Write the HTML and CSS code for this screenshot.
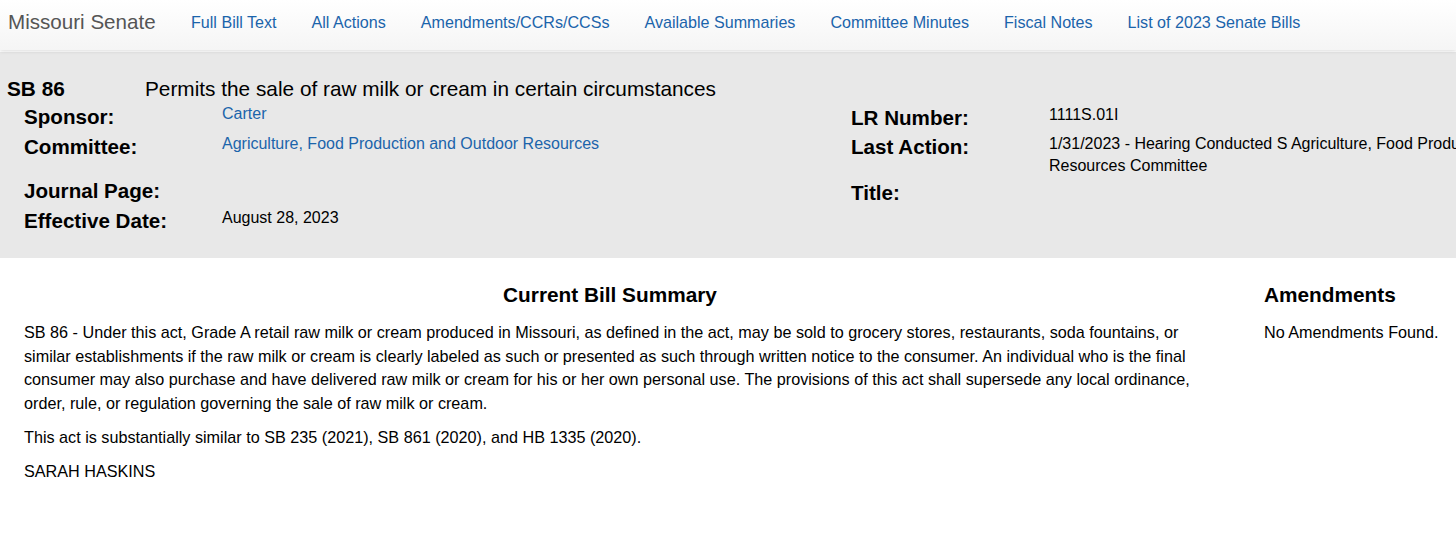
FILE: index.html
```html
<!DOCTYPE html>
<html>
<head>
<meta charset="utf-8">
<link rel="stylesheet" href="styles.css">
</head>
<body>
<nav class="navbar">
  <span class="brand">Missouri Senate</span>
  <ul class="nav-links">
    <li><a href="#">Full Bill Text</a></li>
    <li><a href="#">All Actions</a></li>
    <li><a href="#">Amendments/CCRs/CCSs</a></li>
    <li><a href="#">Available Summaries</a></li>
    <li><a href="#">Committee Minutes</a></li>
    <li><a href="#">Fiscal Notes</a></li>
    <li><a href="#">List of 2023 Senate Bills</a></li>
  </ul>
</nav>
<section class="bill-header">
  <div class="bill-title">
    <span class="bill-num">SB 86</span>
    <span class="bill-desc">Permits the sale of raw milk or cream in certain circumstances</span>
  </div>
  <div class="info">
    <div class="info-col left">
      <div class="row r1"><span class="label">Sponsor:</span><a class="value link" href="#">Carter</a></div>
      <div class="row r2"><span class="label">Committee:</span><a class="value link" href="#">Agriculture, Food Production and Outdoor Resources</a></div>
      <div class="row r3"><span class="label">Journal Page:</span><span class="value"></span></div>
      <div class="row r4"><span class="label">Effective Date:</span><span class="value">August 28, 2023</span></div>
    </div>
    <div class="info-col right">
      <div class="row r1"><span class="label">LR Number:</span><span class="value">1111S.01I</span></div>
      <div class="row r2"><span class="label">Last Action:</span><span class="value wide">1/31/2023 - Hearing Conducted S Agriculture, Food Production and Outdoor Resources Committee</span></div>
      <div class="row r3"><span class="label">Title:</span><span class="value"></span></div>
    </div>
  </div>
</section>
<main class="content">
  <section class="summary">
    <h2>Current Bill Summary</h2>
    <p>SB 86 - Under this act, Grade A retail raw milk or cream produced in Missouri, as defined in the act, may be sold to grocery stores, restaurants, soda fountains, or similar establishments if the raw milk or cream is clearly labeled as such or presented as such through written notice to the consumer. An individual who is the final consumer may also purchase and have delivered raw milk or cream for his or her own personal use. The provisions of this act shall supersede any local ordinance, order, rule, or regulation governing the sale of raw milk or cream.</p>
    <p>This act is substantially similar to SB 235 (2021), SB 861 (2020), and HB 1335 (2020).</p>
    <p>SARAH HASKINS</p>
  </section>
  <aside class="amendments">
    <h2>Amendments</h2>
    <p>No Amendments Found.</p>
  </aside>
</main>
</body>
</html>
```
FILE: styles.css
```css
html { overflow-x: hidden; }
body {
  margin: 0;
  font-family: "Liberation Sans", Arial, Helvetica, sans-serif;
  color: #000;
  background: #fff;
  width: 1700px;
}
a { text-decoration: none; color: #1b64ab; }

.navbar {
  height: 50px;
  box-sizing: border-box;
  padding-bottom: 6px;
  display: flex;
  align-items: center;
  background: linear-gradient(#ffffff, #f5f5f5);
  box-shadow: 0 1px 4px rgba(0,0,0,0.15);
  position: relative;
  z-index: 1;
  width: 1456px;
}
.brand {
  font-size: 20.6px;
  color: #555;
  padding-left: 8px;
  width: 183px;
  flex: none;
}
.nav-links {
  list-style: none;
  margin: 0;
  padding: 0;
  display: flex;
  gap: 35px;
}
.nav-links a { font-size: 16.1px; color: #1b64ab; }

.bill-header {
  background: #e8e8e8;
  height: 206px;
  padding-top: 25px;
  box-sizing: border-box;
  margin-top: 2px;
}
.bill-title {
  display: flex;
  align-items: baseline;
  font-size: 20.8px;
  line-height: 24px;
  padding-left: 7px;
}
.bill-num { font-weight: bold; width: 138px; }
.info {
  display: flex;
  padding-left: 24px;
}
.info-col.left { width: 827px; }
.info-col.right { margin-top: 1px; }
.row { display: flex; align-items: flex-start; }
.label {
  font-weight: bold;
  font-size: 20.6px;
  line-height: 24px;
  flex: none;
  padding-top: 4px;
  width: 198px;
}
.value { font-size: 16px; line-height: 22px; padding-top: 2px; }
.wide { width: 570px; }
.left .r1 { height: 30px; }
.left .r2 { height: 44px; }
.left .r3 { height: 30px; }
.right .r1 { height: 29px; }
.right .r2 { height: 46px; }

.content {
  display: flex;
  width: 1456px;
  padding-top: 25px;
}
.summary {
  width: 1172px;
  padding-left: 24px;
  flex: none;
}
.amendments { padding-left: 68px; }
h2 {
  font-size: 20.8px;
  font-weight: bold;
  margin: 0 0 14px;
  line-height: 24px;
}
.summary h2 { text-align: center; }
p {
  font-size: 16.2px;
  line-height: 23.5px;
  margin: 0 0 10.5px;
}
```
